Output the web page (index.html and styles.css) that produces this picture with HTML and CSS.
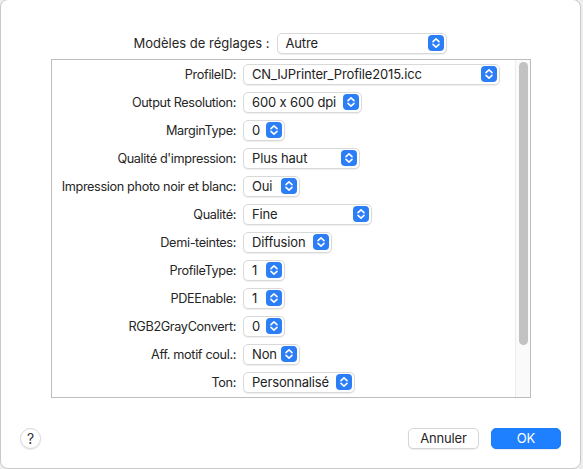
FILE: index.html
```html
<!DOCTYPE html>
<html lang="fr">
<head>
<meta charset="utf-8">
<link rel="stylesheet" href="styles.css">
</head>
<body>
<div class="window">
  <div class="preset">
    <span class="preset-label">Modèles de réglages :</span>
    <div class="popup preset-popup"><span class="val">Autre</span><svg class="chev" viewBox="0 0 16 16"><rect width="16" height="16" rx="4" fill="#2c7ef7"/><path d="M5 6.6 8 3.9 11 6.6M5 9.4 8 12.1 11 9.4" fill="none" stroke="#fff" stroke-width="1.6" stroke-linecap="round" stroke-linejoin="round"/></svg></div>
  </div>
  <div class="box">
    <div class="rows">
      <div class="row"><span class="lbl">ProfileID:</span><div class="popup w-profile"><span class="val">CN_IJPrinter_Profile2015.icc</span><svg class="chev" viewBox="0 0 16 16"><rect width="16" height="16" rx="4" fill="#2c7ef7"/><path d="M5 6.6 8 3.9 11 6.6M5 9.4 8 12.1 11 9.4" fill="none" stroke="#fff" stroke-width="1.6" stroke-linecap="round" stroke-linejoin="round"/></svg></div></div>
      <div class="row"><span class="lbl">Output Resolution:</span><div class="popup w-res"><span class="val">600 x 600 dpi</span><svg class="chev" viewBox="0 0 16 16"><rect width="16" height="16" rx="4" fill="#2c7ef7"/><path d="M5 6.6 8 3.9 11 6.6M5 9.4 8 12.1 11 9.4" fill="none" stroke="#fff" stroke-width="1.6" stroke-linecap="round" stroke-linejoin="round"/></svg></div></div>
      <div class="row"><span class="lbl">MarginType:</span><div class="popup w-num"><span class="val">0</span><svg class="chev" viewBox="0 0 16 16"><rect width="16" height="16" rx="4" fill="#2c7ef7"/><path d="M5 6.6 8 3.9 11 6.6M5 9.4 8 12.1 11 9.4" fill="none" stroke="#fff" stroke-width="1.6" stroke-linecap="round" stroke-linejoin="round"/></svg></div></div>
      <div class="row"><span class="lbl">Qualité d'impression:</span><div class="popup w-haut"><span class="val">Plus haut</span><svg class="chev" viewBox="0 0 16 16"><rect width="16" height="16" rx="4" fill="#2c7ef7"/><path d="M5 6.6 8 3.9 11 6.6M5 9.4 8 12.1 11 9.4" fill="none" stroke="#fff" stroke-width="1.6" stroke-linecap="round" stroke-linejoin="round"/></svg></div></div>
      <div class="row"><span class="lbl">Impression photo noir et blanc:</span><div class="popup w-oui"><span class="val">Oui</span><svg class="chev" viewBox="0 0 16 16"><rect width="16" height="16" rx="4" fill="#2c7ef7"/><path d="M5 6.6 8 3.9 11 6.6M5 9.4 8 12.1 11 9.4" fill="none" stroke="#fff" stroke-width="1.6" stroke-linecap="round" stroke-linejoin="round"/></svg></div></div>
      <div class="row"><span class="lbl">Qualité:</span><div class="popup w-fine"><span class="val">Fine</span><svg class="chev" viewBox="0 0 16 16"><rect width="16" height="16" rx="4" fill="#2c7ef7"/><path d="M5 6.6 8 3.9 11 6.6M5 9.4 8 12.1 11 9.4" fill="none" stroke="#fff" stroke-width="1.6" stroke-linecap="round" stroke-linejoin="round"/></svg></div></div>
      <div class="row"><span class="lbl">Demi-teintes:</span><div class="popup w-diff"><span class="val">Diffusion</span><svg class="chev" viewBox="0 0 16 16"><rect width="16" height="16" rx="4" fill="#2c7ef7"/><path d="M5 6.6 8 3.9 11 6.6M5 9.4 8 12.1 11 9.4" fill="none" stroke="#fff" stroke-width="1.6" stroke-linecap="round" stroke-linejoin="round"/></svg></div></div>
      <div class="row"><span class="lbl">ProfileType:</span><div class="popup w-num"><span class="val">1</span><svg class="chev" viewBox="0 0 16 16"><rect width="16" height="16" rx="4" fill="#2c7ef7"/><path d="M5 6.6 8 3.9 11 6.6M5 9.4 8 12.1 11 9.4" fill="none" stroke="#fff" stroke-width="1.6" stroke-linecap="round" stroke-linejoin="round"/></svg></div></div>
      <div class="row"><span class="lbl">PDEEnable:</span><div class="popup w-num"><span class="val">1</span><svg class="chev" viewBox="0 0 16 16"><rect width="16" height="16" rx="4" fill="#2c7ef7"/><path d="M5 6.6 8 3.9 11 6.6M5 9.4 8 12.1 11 9.4" fill="none" stroke="#fff" stroke-width="1.6" stroke-linecap="round" stroke-linejoin="round"/></svg></div></div>
      <div class="row"><span class="lbl">RGB2GrayConvert:</span><div class="popup w-num"><span class="val">0</span><svg class="chev" viewBox="0 0 16 16"><rect width="16" height="16" rx="4" fill="#2c7ef7"/><path d="M5 6.6 8 3.9 11 6.6M5 9.4 8 12.1 11 9.4" fill="none" stroke="#fff" stroke-width="1.6" stroke-linecap="round" stroke-linejoin="round"/></svg></div></div>
      <div class="row"><span class="lbl">Aff. motif coul.:</span><div class="popup w-oui"><span class="val">Non</span><svg class="chev" viewBox="0 0 16 16"><rect width="16" height="16" rx="4" fill="#2c7ef7"/><path d="M5 6.6 8 3.9 11 6.6M5 9.4 8 12.1 11 9.4" fill="none" stroke="#fff" stroke-width="1.6" stroke-linecap="round" stroke-linejoin="round"/></svg></div></div>
      <div class="row"><span class="lbl">Ton:</span><div class="popup w-ton"><span class="val">Personnalisé</span><svg class="chev" viewBox="0 0 16 16"><rect width="16" height="16" rx="4" fill="#2c7ef7"/><path d="M5 6.6 8 3.9 11 6.6M5 9.4 8 12.1 11 9.4" fill="none" stroke="#fff" stroke-width="1.6" stroke-linecap="round" stroke-linejoin="round"/></svg></div></div>
    </div>
    <div class="scrollbar"><div class="thumb"></div></div>
  </div>
  <div class="footer">
    <div class="help">?</div>
    <div class="actions">
      <div class="btn">Annuler</div>
      <div class="btn btn-ok">OK</div>
    </div>
  </div>
</div>
</body>
</html>
```
FILE: styles.css
```css
html, body {
  margin: 0;
  padding: 0;
}
body {
  background: #eeeeee;
  width: 583px;
  height: 469px;
  overflow: hidden;
  font-family: Inter, "Liberation Sans", Arial, sans-serif;
  font-size: 13px;
  letter-spacing: -0.15px;
  color: #262626;
}
.window {
  box-sizing: border-box;
  width: 581px;
  height: 470px;
  margin-top: -1px;
  background: #fff;
  border: 1px solid #c9c9c9;
  border-radius: 8px;
  display: flex;
  flex-direction: column;
}
.preset {
  display: flex;
  align-items: center;
  justify-content: center;
  gap: 7px;
  height: 20px;
  margin-top: 33px;
  padding-right: 1px;
}
.preset-label {
  color: #262626;
  letter-spacing: 0;
}
.popup {
  box-sizing: border-box;
  height: 21px;
  background: #fff;
  border: 1px solid #d9d9d9;
  border-radius: 5px;
  box-shadow: 0 1px 1px rgba(0, 0, 0, 0.07);
  display: flex;
  align-items: center;
  justify-content: space-between;
  padding: 0 2px 0 8px;
}
.preset-popup {
  width: 170px;
  height: 21px;
}
.val {
  white-space: nowrap;
  color: #222;
}
.chev {
  width: 16px;
  height: 16px;
  flex: none;
}
.box {
  box-sizing: border-box;
  margin: 6px 0 0 50px;
  width: 480px;
  height: 339px;
  border: 1px solid #bdbdbd;
  display: flex;
}
.rows {
  flex: 1;
  display: flex;
  flex-direction: column;
}
.row {
  height: 28px;
  display: grid;
  grid-template-columns: 184px auto;
  column-gap: 7px;
  align-items: center;
  justify-items: start;
}
.lbl {
  justify-self: end;
  white-space: nowrap;
  font-size: 12.7px;
  letter-spacing: -0.36px;
}
.w-profile { width: 257px; }
.w-res { width: 119px; }
.w-num { width: 42px; }
.w-haut { width: 117px; }
.w-oui { width: 57px; }
.w-fine { width: 129px; }
.w-diff { width: 89px; }
.w-ton { width: 112px; }
.scrollbar {
  box-sizing: border-box;
  width: 15px;
  background: #fafafa;
  border-left: 1px solid #ececec;
  padding: 2px 2px 0 3px;
}
.thumb {
  height: 283px;
  background: #c2c2c2;
  border-radius: 5px;
}
.footer {
  display: flex;
  align-items: center;
  justify-content: space-between;
  margin-top: 29px;
  padding: 0 19px 0 19px;
  height: 22px;
}
.help {
  box-sizing: border-box;
  width: 21px;
  height: 21px;
  border-radius: 50%;
  border: 1px solid #d6d6d6;
  box-shadow: 0 1px 1px rgba(0, 0, 0, 0.1);
  display: flex;
  align-items: center;
  justify-content: center;
  font-size: 14px;
  color: #333;
}
.actions {
  display: flex;
  gap: 12px;
}
.btn {
  box-sizing: border-box;
  width: 71px;
  height: 21px;
  border-radius: 5px;
  border: 1px solid #d6d6d6;
  background: #fff;
  box-shadow: 0 1px 1px rgba(0, 0, 0, 0.08);
  display: flex;
  align-items: center;
  justify-content: center;
  color: #262626;
}
.btn-ok {
  width: 70px;
  border-color: #1c7cf9;
  background: #1f80ff;
  color: #fff;
}
```
